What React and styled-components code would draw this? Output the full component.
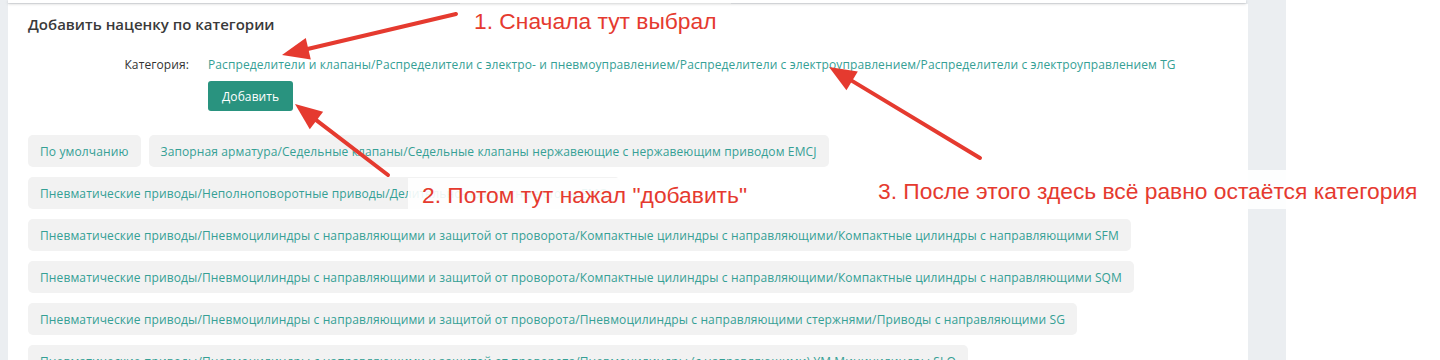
import React from 'react';
import styled, { createGlobalStyle } from 'styled-components';

const GlobalStyle = createGlobalStyle`
  html, body {
    margin: 0;
    padding: 0;
    background: #ffffff;
  }
  * {
    box-sizing: border-box;
  }
`;

const categories = [
  'По умолчанию',
  'Запорная арматура/Седельные клапаны/Седельные клапаны нержавеющие с нержавеющим приводом EMCJ',
  'Пневматические приводы/Неполноповоротные приводы/Делительно-поворотные столы EMQ',
  'Пневматические приводы/Пневмоцилиндры с направляющими и защитой от проворота/Компактные цилиндры с направляющими/Компактные цилиндры с направляющими SFM',
  'Пневматические приводы/Пневмоцилиндры с направляющими и защитой от проворота/Компактные цилиндры с направляющими/Компактные цилиндры с направляющими SQM',
  'Пневматические приводы/Пневмоцилиндры с направляющими и защитой от проворота/Пневмоцилиндры с направляющими стержнями/Приводы с направляющими SG',
  'Пневматические приводы/Пневмоцилиндры с направляющими и защитой от проворота/Пневмоцилиндры (с направляющими) YM Миницилиндры SLQ',
];

// стрелки поверх скриншота: хвост -> остриё
const arrows = [
  { x1: 456, y1: 14, x2: 282, y2: 55 },
  { x1: 388, y1: 175, x2: 295, y2: 104 },
  { x1: 980, y1: 158, x2: 829, y2: 67 },
];

function Arrow({ x1, y1, x2, y2 }) {
  const len = Math.hypot(x2 - x1, y2 - y1);
  const ux = (x2 - x1) / len;
  const uy = (y2 - y1) / len;
  const headLen = 27;
  const half = 11;
  const bx = x2 - ux * headLen;
  const by = y2 - uy * headLen;
  const p1 = `${bx - uy * half},${by + ux * half}`;
  const p2 = `${bx + uy * half},${by - ux * half}`;
  return (
    <g>
      <line x1={x1} y1={y1} x2={bx + ux * 4} y2={by + uy * 4} stroke="#e53a2f" strokeWidth="4" strokeLinecap="round" />
      <polygon points={`${x2},${y2} ${p1} ${p2}`} fill="#e53a2f" />
    </g>
  );
}

export default function App() {
  return (
    <>
      <GlobalStyle />
      <Screen>
        <Shell>
          <PrevCardEdge />
          <Card>
            <CardTitle>Добавить наценку по категории</CardTitle>

            <FormRow>
              <FieldLabel>Категория:</FieldLabel>
              <FieldValue>
                Распределители и клапаны/Распределители с электро- и пневмоуправлением/Распределители с электроуправлением/Распределители с электроуправлением TG
              </FieldValue>
            </FormRow>

            <FormRow>
              <span />
              <AddButton type="button">Добавить</AddButton>
            </FormRow>

            <ChipList>
              {categories.map((c) => (
                <Chip key={c}>{c}</Chip>
              ))}
            </ChipList>
          </Card>
        </Shell>

        <Overlay>
          <ArrowLayer width="1440" height="360" viewBox="0 0 1440 360">
            {arrows.map((a, i) => (
              <Arrow key={i} {...a} />
            ))}
          </ArrowLayer>
          <Note $left={460} $top={0} $height={42} $lh={43}>1. Сначала тут выбрал</Note>
          <Note $left={408} $top={178} $height={32} $lh={34}>2. Потом тут нажал "добавить"</Note>
          <Note $left={864} $top={170} $height={39} $lh={42}>3. После этого здесь всё равно остаётся категория</Note>
        </Overlay>
      </Screen>
    </>
  );
}

const Screen = styled.div`
  position: relative;
  width: 1440px;
  height: 360px;
  overflow: hidden;
  font-family: 'Open Sans', 'Noto Sans', sans-serif;
`;

const Shell = styled.div`
  width: 1286px;
  height: 360px;
  background: #ebeef1;
  padding: 0 38px 0 8px;
`;

const PrevCardEdge = styled.div`
  height: 3px;
  width: 1238px;
  background: #ffffff;
  box-shadow: 0 1px 3px rgba(0, 0, 0, 0.18);
  position: relative;
  z-index: 1;
`;

const Card = styled.div`
  background: #ffffff;
  margin-top: 1px;
  padding: 9px 20px 0 20px;
  height: 400px;
`;

const CardTitle = styled.h3`
  margin: 0 0 20px 0;
  font-size: 15px;
  line-height: 22px;
  font-weight: 600;
  color: #3a3a3a;
`;

const FormRow = styled.div`
  display: grid;
  grid-template-columns: 161px 1fr;
  column-gap: 19px;
  align-items: center;
  margin-bottom: 6px;
`;

const FieldLabel = styled.span`
  text-align: right;
  font-size: 12px;
  line-height: 20px;
  letter-spacing: 0.1px;
  color: #333333;
`;

const FieldValue = styled.span`
  font-size: 12px;
  line-height: 20px;
  letter-spacing: 0.1px;
  color: #35a095;
  white-space: nowrap;
`;

const AddButton = styled.button`
  justify-self: start;
  height: 30px;
  padding: 0 14px;
  border: none;
  border-radius: 3px;
  background: #29937f;
  color: #ffffff;
  font-family: inherit;
  font-size: 12px;
  letter-spacing: 0.1px;
  cursor: pointer;
`;

const ChipList = styled.div`
  display: flex;
  flex-wrap: wrap;
  gap: 10px 8px;
  margin-top: 24px;
`;

const Chip = styled.div`
  height: 32px;
  display: flex;
  align-items: center;
  padding: 0 12px;
  border-radius: 5px;
  background: #f2f2f2;
  color: #35a095;
  font-size: 12px;
  letter-spacing: 0.12px;
  white-space: nowrap;
`;

const Overlay = styled.div`
  position: absolute;
  inset: 0;
  pointer-events: none;
`;

const ArrowLayer = styled.svg`
  position: absolute;
  left: 0;
  top: 0;
`;

const Note = styled.div`
  position: absolute;
  left: ${(p) => p.$left}px;
  top: ${(p) => p.$top}px;
  height: ${(p) => p.$height}px;
  line-height: ${(p) => p.$lh}px;
  padding: 0 14px;
  background: rgba(255, 255, 255, 0.9);
  color: #e53a2f;
  font-family: 'Liberation Sans', Arial, sans-serif;
  font-size: 22.8px;
  white-space: nowrap;
`;
